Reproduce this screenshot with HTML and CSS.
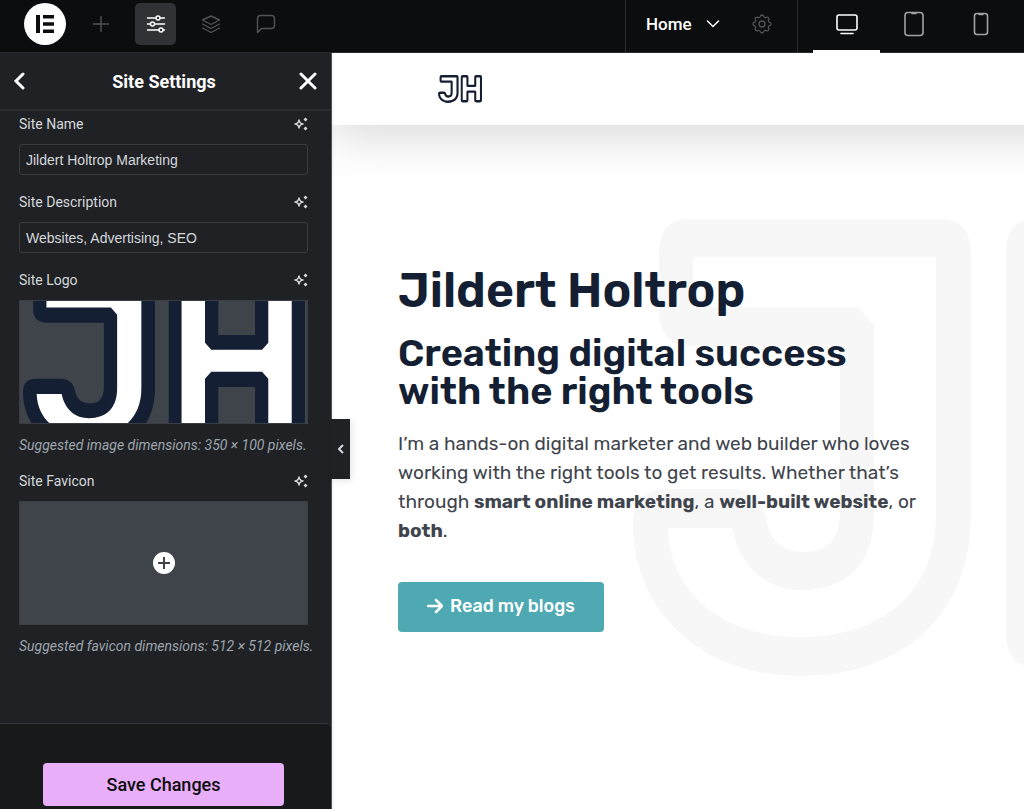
FILE: index.html
```
<!DOCTYPE html>
<html lang="en">
<head>
  <meta charset="UTF-8">
  <meta name="viewport" content="width=device-width, initial-scale=1">
  <title>Site Settings</title>
  <link rel="stylesheet" href="styles.css">
</head>
<body>
  <svg class="defs" aria-hidden="true">
    <symbol id="logo" viewBox="0 0 722 457">
      <path fill="currentColor" d="M56 0H306Q338 0 338 34V296C338 395 270 457 167 457C68 457 0 392 0 304Q0 270 34 270H98Q126 270 133 300C137 322 150 333 171 333C195 333 207 320 207 291V127H58Q26 124 26 93V34Q26 0 56 0Z"/>
      <path fill="#fff" d="M60 38H303V296C303 372 250 418 167 418C91 418 37 376 35 309H99C107 349 134 371 169 371C213 371 241 345 241 295V106L225 88H60Z"/>
      <path fill="currentColor" d="M403 0H470Q500 0 500 34V158H594V34Q594 0 624 0H692Q722 0 722 34V414Q722 448 692 448H624Q594 448 594 414V291H500V414Q500 448 470 448H403Q373 448 373 414V34Q373 0 403 0Z"/>
      <path fill="#fff" d="M406 38H466V178L482 196H612L628 178V38H688V410H628V270L612 252H482L466 270V410H406Z"/>
    </symbol>
    <symbol id="sparkle" viewBox="0 0 14 14">
      <path d="M5 3Q5.500 6.500 9 7Q5.500 7.500 5 11Q4.500 7.500 1 7Q4.500 6.500 5 3Z" fill="none" stroke="currentColor" stroke-width="1.500" stroke-linejoin="round"/>
      <path d="M11.500 .6L13.500 2.600L11.500 4.600L9.500 2.600ZM11.500 9.400L13.500 11.400L11.500 13.400L9.500 11.400Z" fill="currentColor"/>
    </symbol>
  </svg>

  <header class="topbar">
    <div class="tools">
      <button class="brand" aria-label="Menu">
        <svg viewBox="0 0 20 20" fill="#0c0d0e"><path d="M1 1h4v18H1zM8 1h11v3.600H8zM8 8.200h11v3.600H8zM8 15.400h11V19H8z"/></svg>
      </button>
      <button class="tool" aria-label="Add element">
        <svg viewBox="0 0 24 24"><path d="M12 4.500v15M4.500 12h15"/></svg>
      </button>
      <button class="tool active" aria-label="Site settings">
        <svg viewBox="0 0 24 24">
          <path d="M3.500 6h8.500M16 6h4.500M3.500 12h3M10.500 12h10M3.500 18h11.500M19 18h1.500"/>
          <circle cx="14" cy="6" r="2"/><circle cx="8.500" cy="12" r="2"/><circle cx="17" cy="18" r="2"/>
        </svg>
      </button>
      <button class="tool" aria-label="Structure">
        <svg viewBox="0 0 24 24"><path d="M12 4l8.500 4-8.500 4.500L3.500 8zM3.500 12l8.500 4.500 8.500-4.500M3.500 16l8.500 4.500 8.500-4.500"/></svg>
      </button>
      <button class="tool" aria-label="Notes">
        <svg viewBox="0 0 24 24"><path d="M3.500 20.500V6.500a3 3 0 0 1 3-3h11a3 3 0 0 1 3 3v7a3 3 0 0 1-3 3H7.500z"/></svg>
      </button>
    </div>
    <div class="page-nav">
      <button class="page-select">
        Home
        <svg viewBox="0 0 14 8"><path d="M1.500 1l5.500 5.500L12.500 1"/></svg>
      </button>
      <button class="gear" aria-label="Page settings">
        <svg viewBox="0 0 24 24">
          <path d="M10.325 4.317c.426-1.756 2.924-1.756 3.350 0a1.724 1.724 0 0 0 2.573 1.066c1.543-.94 3.310.826 2.370 2.370a1.724 1.724 0 0 0 1.065 2.572c1.756.426 1.756 2.924 0 3.350a1.724 1.724 0 0 0-1.066 2.573c.94 1.543-.826 3.310-2.370 2.370a1.724 1.724 0 0 0-2.572 1.065c-.426 1.756-2.924 1.756-3.350 0a1.724 1.724 0 0 0-2.573-1.066c-1.543.94-3.310-.826-2.370-2.370a1.724 1.724 0 0 0-1.065-2.572c-1.756-.426-1.756-2.924 0-3.350a1.724 1.724 0 0 0 1.066-2.573c-.94-1.543.826-3.310 2.370-2.370c1 .608 2.296.070 2.572-1.065z"/>
          <circle cx="12" cy="12" r="3"/>
        </svg>
      </button>
    </div>
    <div class="devices">
      <button class="device active" aria-label="Desktop">
        <svg viewBox="0 0 28 28"><rect x="4" y="5" width="20" height="15" rx="2"/><path d="M8 23.500h12"/></svg>
      </button>
      <button class="device" aria-label="Tablet">
        <svg viewBox="0 0 28 28"><rect x="5" y="2.500" width="18" height="23" rx="3"/><path d="M12 3.500h4"/></svg>
      </button>
      <button class="device" aria-label="Mobile">
        <svg viewBox="0 0 28 28"><rect x="7.500" y="3.500" width="13" height="21" rx="2.500"/><path d="M12 4.500h4"/></svg>
      </button>
    </div>
  </header>

  <div class="workspace">
    <aside class="panel">
      <div class="panel-header">
        <button aria-label="Back"><svg viewBox="0 0 18 18"><path d="M12 2L5 9l7 7"/></svg></button>
        <h1>Site Settings</h1>
        <button aria-label="Close"><svg viewBox="0 0 18 18"><path d="M2 2l14 14M16 2L2 16"/></svg></button>
      </div>

      <div class="controls">
        <div class="control">
          <div class="control-title">
            <label for="siteName">Site Name</label>
            <button aria-label="Write with AI"><svg><use href="#sparkle"/></svg></button>
          </div>
          <input type="text" id="siteName" value="Jildert Holtrop Marketing">
        </div>
        <div class="control">
          <div class="control-title">
            <label for="siteDescription">Site Description</label>
            <button aria-label="Write with AI"><svg><use href="#sparkle"/></svg></button>
          </div>
          <input type="text" id="siteDescription" value="Websites, Advertising, SEO">
        </div>
        <div class="control">
          <div class="control-title">
            <span>Site Logo</span>
            <button aria-label="Create with AI"><svg><use href="#sparkle"/></svg></button>
          </div>
          <button class="media" aria-label="Choose logo">
            <svg class="media-logo"><use href="#logo"/></svg>
          </button>
          <p class="hint">Suggested image dimensions: 350 × 100 pixels.</p>
        </div>
        <div class="control">
          <div class="control-title">
            <span>Site Favicon</span>
            <button aria-label="Create with AI"><svg><use href="#sparkle"/></svg></button>
          </div>
          <button class="media" aria-label="Choose favicon">
            <svg class="media-add" viewBox="0 0 22 22"><circle cx="11" cy="11" r="11" fill="#fff"/><path d="M11 5v12M5 11h12" stroke="#3f444b" stroke-width="2"/></svg>
          </button>
          <p class="hint">Suggested favicon dimensions: 512 × 512 pixels.</p>
        </div>
      </div>

      <div class="panel-footer">
        <button class="save">Save Changes</button>
      </div>

      <button class="collapse" aria-label="Hide panel">
        <svg viewBox="0 0 6 10"><path d="M5 1L1 5l4 4"/></svg>
      </button>
    </aside>

    <main class="preview">
      <div class="site-header">
        <a href="#" aria-label="Jildert Holtrop"><svg class="site-logo"><use href="#logo"/></svg></a>
      </div>
      <section class="hero">
        <svg class="watermark" aria-hidden="true"><use href="#logo"/></svg>
        <div class="hero-content">
          <h2>Jildert Holtrop</h2>
          <h3>Creating digital success<br>with the right tools</h3>
          <p>I’m a hands-on digital marketer and web builder who loves<br>
            working with the right tools to get results. Whether that’s<br>
            through <strong>smart online marketing</strong>, a <strong>well-built website</strong>, or<br>
            <strong>both</strong>.</p>
          <a href="#" class="cta">
            <svg viewBox="0 0 16 16"><path d="M1 8h14M9 2l6 6-6 6"/></svg>
            Read my blogs
          </a>
        </div>
      </section>
    </main>
  </div>
</body>
</html>
```
FILE: styles.css
```
:root {
  --bar: #0c0d0e;
  --panel: #1f2124;
  --line: #3a3c40;
  --text: #d5d8dc;
  --navy: #141f33;
  --teal: #4ea9b3;
  --pink: #e8aef7;
}

* {
  box-sizing: border-box;
}

body {
  margin: 0;
  min-height: 100vh;
  display: flex;
  flex-direction: column;
  font-family: Roboto, "Liberation Sans", sans-serif;
  background: #fff;
}

button {
  display: flex;
  align-items: center;
  justify-content: center;
  padding: 0;
  border: 0;
  background: none;
  color: inherit;
  font: inherit;
  cursor: pointer;
}

svg {
  display: block;
  flex: none;
}

.defs {
  position: absolute;
  width: 0;
  height: 0;
}

/* Top bar */
.topbar {
  display: flex;
  height: 53px;
  background: var(--bar);
  box-shadow: inset 0 -1px #2c2d30;
  color: #fff;
}

.topbar svg {
  fill: none;
  stroke: currentColor;
  stroke-linecap: round;
  stroke-linejoin: round;
}

.tools {
  flex: 1;
  display: flex;
  align-items: flex-start;
  gap: 14px;
  padding: 3px 24px 0;
}

.brand {
  width: 42px;
  height: 42px;
  border-radius: 50%;
  background: #fff;
}

.topbar .brand svg {
  width: 20px;
  height: 20px;
  fill: var(--bar);
  stroke: none;
}

.tool {
  width: 41px;
  height: 42px;
  border-radius: 5px;
  color: #515357;
}

.tool svg {
  width: 24px;
  height: 24px;
  stroke-width: 1.4;
}

.tool.active {
  background: #313235;
  color: #fff;
}

.page-nav {
  display: flex;
  align-items: center;
  gap: 30px;
  width: 172px;
  padding: 0 20px 5px;
  border-left: 1px solid #2c2d30;
}

.page-select {
  gap: 14px;
  font-size: 17px;
  font-weight: 500;
}

.page-select svg {
  width: 14px;
  height: 8px;
  stroke-width: 1.5;
}

.gear {
  color: #515357;
}

.gear svg {
  width: 24px;
  height: 24px;
  stroke-width: 1.3;
}

.devices {
  display: flex;
  padding: 0 10px 0 15px;
  border-left: 1px solid #2c2d30;
}

.device {
  width: 67px;
  padding-bottom: 2px;
  border-bottom: 3px solid transparent;
  color: #a0a2a5;
}

.device svg {
  width: 28px;
  height: 28px;
  stroke-width: 1.6;
}

.device.active {
  border-color: #fff;
  color: #fff;
}

/* Settings panel */
.workspace {
  flex: 1;
  display: flex;
}

.panel {
  position: relative;
  z-index: 2;
  display: flex;
  flex-direction: column;
  flex: none;
  width: 332px;
  background: var(--panel);
  border-right: 1px solid #515357;
  box-shadow: 0 0 4px rgba(0, 0, 0, 0.1);
  color: var(--text);
}

.panel-header {
  display: flex;
  align-items: center;
  justify-content: space-between;
  height: 58px;
  padding: 0 14px 0 11px;
  border-bottom: 2px solid #2c2d30;
  color: #fff;
}

.panel-header h1 {
  margin: 0;
  font-size: 18px;
  font-weight: 700;
}

.panel-header svg {
  width: 18px;
  height: 18px;
  fill: none;
  stroke: currentColor;
  stroke-width: 3;
  stroke-linecap: round;
}

.controls {
  flex: 1;
  padding: 4px 23px 0 19px;
}

.control {
  margin-bottom: 18px;
}

.control-title {
  display: flex;
  align-items: center;
  justify-content: space-between;
  height: 18px;
  margin-bottom: 11px;
  font-size: 14px;
}

.control-title svg {
  width: 14px;
  height: 14px;
}

.control input {
  display: block;
  width: 100%;
  height: 31px;
  padding: 0 6px;
  border: 1px solid var(--line);
  border-radius: 3px;
  background: transparent;
  color: var(--text);
  font-family: "Liberation Sans", Arial, sans-serif;
  font-size: 14px;
}

.media {
  width: 100%;
  height: 124px;
  overflow: hidden;
  border: 1px solid #3a3e44;
  background: #3f444b;
}

.media-logo {
  width: 282px;
  height: 179px;
  color: var(--navy);
}

.media-add {
  width: 22px;
  height: 22px;
}

.hint {
  margin: 12px 0 0;
  color: #9da5ae;
  font-size: 14px;
  font-style: italic;
  line-height: 18px;
  white-space: nowrap;
}

.panel-footer {
  padding: 39px 47px 3px 43px;
  background: #18191b;
  border-top: 1px solid #34363a;
  border-top-right-radius: 5px;
}

.save {
  width: 100%;
  height: 43px;
  border-radius: 4px;
  background: var(--pink);
  color: #0c0d0e;
  font-size: 18px;
  font-weight: 500;
}

.collapse {
  position: absolute;
  left: 100%;
  top: 366px;
  width: 19px;
  height: 60px;
  background: var(--panel);
  box-shadow: 2px 2px 6px rgba(0, 0, 0, 0.1);
}

.collapse svg {
  width: 6px;
  height: 10px;
  fill: none;
  stroke: currentColor;
  stroke-width: 2;
}

/* Site preview */
.preview {
  flex: 1;
  min-width: 0;
  display: flex;
  flex-direction: column;
  overflow: hidden;
  font-family: Rubik, Inter, sans-serif;
}

.site-header {
  position: relative;
  z-index: 1;
  display: flex;
  align-items: center;
  height: 72px;
  margin-right: -60px;
  padding: 0 106px;
  background: #fff;
  box-shadow: 0 10px 50px rgba(0, 0, 0, 0.16);
}

.site-logo {
  width: 44px;
  height: 28px;
  color: var(--navy);
}

.hero {
  position: relative;
  flex: 1;
  padding: 137px 66px 64px;
  overflow: hidden;
}

.watermark {
  position: absolute;
  left: 301px;
  top: 94px;
  width: 722px;
  height: 457px;
  color: #f7f7f7;
}

.hero-content {
  position: relative;
}

.hero h2,
.hero h3 {
  margin: 0;
  color: var(--navy);
  font-weight: 600;
}

.hero h2 {
  margin-bottom: 14px;
  font-size: 48px;
  line-height: 58px;
}

.hero h3 {
  margin-bottom: 19px;
  font-size: 38px;
  line-height: 38px;
  white-space: nowrap;
}

.hero p {
  margin: 0 0 37px;
  color: #40444c;
  font-size: 19px;
  line-height: 29px;
  white-space: nowrap;
}

.cta {
  display: inline-flex;
  align-items: center;
  gap: 7px;
  height: 50px;
  padding: 0 29px 3px;
  border-radius: 4px;
  background: var(--teal);
  color: #fff;
  font-size: 18px;
  font-weight: 500;
  text-decoration: none;
}

.cta svg {
  width: 16px;
  height: 16px;
  fill: none;
  stroke: currentColor;
  stroke-width: 2.5;
  stroke-linecap: round;
  stroke-linejoin: round;
}
```
